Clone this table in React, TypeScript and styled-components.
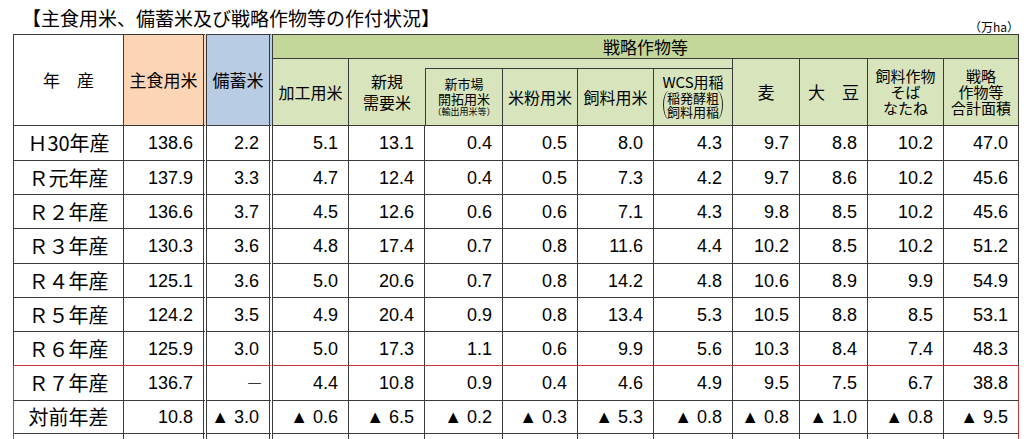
import React from 'react';
import styled, { createGlobalStyle, css } from 'styled-components';

const line = '#3a3a3a';
const red = '#c9363f';

const GlobalStyle = createGlobalStyle`
  body {
    margin: 0;
    background: #fff;
    color: #000;
    font-family: "Noto Sans CJK JP", sans-serif;
  }
`;

const Page = styled.div`
  width: 1006px;
  padding-left: 13px;
`;

const TitleBar = styled.div`
  display: flex;
  justify-content: space-between;
  align-items: flex-end;
  height: 34px;
`;

const Title = styled.h1`
  align-self: flex-start;
  margin: 0;
  padding: 8px 0 0 9px;
  font-size: 19px;
  line-height: 20px;
  font-weight: normal;
`;

const Unit = styled.span`
  font-size: 12px;
  line-height: 12px;
  padding-bottom: 1px;
`;

const Table = styled.table`
  width: 1006px;
  table-layout: fixed;
  border-collapse: separate;
  border-spacing: 0;
`;

const Col = styled.col<{ $w: number }>`
  width: ${p => p.$w}px;
`;

const Row = styled.tr<{ $h: number }>`
  height: ${p => p.$h}px;
`;

type Edge = {
  $first?: boolean;
  $top?: boolean;
  $double?: boolean;
  $noRight?: boolean;
  $leftLine?: boolean;
  $redBottom?: boolean;
  $redLeft?: boolean;
  $redRight?: boolean;
};

const edges = css<Edge>`
  padding: 0;
  border-top: ${p => (p.$top ? `1px solid ${line}` : 'none')};
  border-left: ${p =>
    p.$first || p.$leftLine ? `1px solid ${p.$redLeft ? red : line}` : 'none'};
  border-right: ${p =>
    p.$noRight
      ? 'none'
      : p.$double
      ? `4px double ${line}`
      : `1px solid ${p.$redRight ? red : line}`};
  border-bottom: 1px solid ${p => (p.$redBottom ? red : line)};
`;

const HeadCell = styled.th<Edge & { $bg: string; $size?: number }>`
  ${edges};
  background: ${p => p.$bg};
  font-size: ${p => p.$size ?? 16}px;
  line-height: 1.25;
  font-weight: normal;
  text-align: center;
  vertical-align: middle;
`;

const Stack = styled.span<{ $size: number; $lh: number }>`
  display: block;
  font-size: ${p => p.$size}px;
  line-height: ${p => p.$lh}px;
`;

const Paren = styled.span`
  display: inline-block;
  margin-top: 1px;
  padding: 0 3px;
  border-left: 1.5px solid #222;
  border-right: 1.5px solid #222;
  border-radius: 6px / 14px;
  font-size: 13px;
  line-height: 14px;
`;

const Cell = styled.td<Edge & { $label?: boolean }>`
  ${edges};
  text-align: ${p => (p.$label ? 'center' : 'right')};
  padding-right: ${p => (p.$label ? 0 : 10)}px;
  font-family: ${p =>
    p.$label ? '"Noto Sans CJK JP", sans-serif' : '"Liberation Sans", "Noto Sans CJK JP", sans-serif'};
  font-size: ${p => (p.$label ? 20 : 18)}px;
  line-height: 20px;
  white-space: nowrap;
`;

const Dash = styled.span`
  font-family: "Noto Sans CJK JP", sans-serif;
  font-size: 15px;
  margin-right: -3px;
`;

const colors = {
  white: '#ffffff',
  rice: '#fbd5b5',
  reserve: '#b8cce4',
  crop: '#c4d79b',
  sub: '#d8e4bc',
};

const widths = [111, 83, 66, 76, 76, 78, 75, 76, 79, 67, 68, 76, 75];

// 行の高さ（元の表に合わせて少しずつ違う）
const heights = [35, 34, 34, 35, 34, 34, 34, 35, 33, 34];

const rows: string[][] = [
  ['Ｈ30年産', '138.6', '2.2', '5.1', '13.1', '0.4', '0.5', '8.0', '4.3', '9.7', '8.8', '10.2', '47.0'],
  ['Ｒ元年産', '137.9', '3.3', '4.7', '12.4', '0.4', '0.5', '7.3', '4.2', '9.7', '8.6', '10.2', '45.6'],
  ['Ｒ２年産', '136.6', '3.7', '4.5', '12.6', '0.6', '0.6', '7.1', '4.3', '9.8', '8.5', '10.2', '45.6'],
  ['Ｒ３年産', '130.3', '3.6', '4.8', '17.4', '0.7', '0.8', '11.6', '4.4', '10.2', '8.5', '10.2', '51.2'],
  ['Ｒ４年産', '125.1', '3.6', '5.0', '20.6', '0.7', '0.8', '14.2', '4.8', '10.6', '8.9', '9.9', '54.9'],
  ['Ｒ５年産', '124.2', '3.5', '4.9', '20.4', '0.9', '0.8', '13.4', '5.3', '10.5', '8.8', '8.5', '53.1'],
  ['Ｒ６年産', '125.9', '3.0', '5.0', '17.3', '1.1', '0.6', '9.9', '5.6', '10.3', '8.4', '7.4', '48.3'],
  ['Ｒ７年産', '136.7', '―', '4.4', '10.8', '0.9', '0.4', '4.6', '4.9', '9.5', '7.5', '6.7', '38.8'],
  ['対前年差', '10.8', '▲ 3.0', '▲ 0.6', '▲ 6.5', '▲ 0.2', '▲ 0.3', '▲ 5.3', '▲ 0.8', '▲ 0.8', '▲ 1.0', '▲ 0.8', '▲ 9.5'],
  ['', '', '', '', '', '', '', '', '', '', '', '', ''],
];

// R7 から下を赤枠で囲む
const boxFrom = 7;

export default function App() {
  return (
    <Page>
      <GlobalStyle />
      <TitleBar>
        <Title>【主食用米、備蓄米及び戦略作物等の作付状況】</Title>
        <Unit>（万ha）</Unit>
      </TitleBar>
      <Table>
        <colgroup>
          {widths.map((w, i) => (
            <Col key={i} $w={w} />
          ))}
        </colgroup>
        <thead>
          <Row $h={25}>
            <HeadCell rowSpan={3} $first $top $bg={colors.white} $size={17}>
              年　産
            </HeadCell>
            <HeadCell rowSpan={3} $top $double $bg={colors.rice} $size={17}>
              主食用米
            </HeadCell>
            <HeadCell rowSpan={3} $top $double $bg={colors.reserve} $size={17}>
              備蓄米
            </HeadCell>
            <HeadCell colSpan={10} $top $bg={colors.crop} $size={17}>
              戦略作物等
            </HeadCell>
          </Row>
          <Row $h={10}>
            <HeadCell rowSpan={2} $bg={colors.sub}>
              加工用米
            </HeadCell>
            <HeadCell rowSpan={2} $noRight $bg={colors.sub}>
              <Stack $size={16} $lh={21}>新規</Stack>
              <Stack $size={16} $lh={21}>需要米</Stack>
            </HeadCell>
            <HeadCell colSpan={4} $bg={colors.sub} $size={1} />
            <HeadCell rowSpan={2} $bg={colors.sub} $size={17}>
              麦
            </HeadCell>
            <HeadCell rowSpan={2} $bg={colors.sub} $size={17}>
              大　豆
            </HeadCell>
            <HeadCell rowSpan={2} $bg={colors.sub}>
              <Stack $size={15} $lh={16}>飼料作物</Stack>
              <Stack $size={15} $lh={16}>そば</Stack>
              <Stack $size={15} $lh={16}>なたね</Stack>
            </HeadCell>
            <HeadCell rowSpan={2} $bg={colors.sub}>
              <Stack $size={15} $lh={16}>戦略</Stack>
              <Stack $size={15} $lh={16}>作物等</Stack>
              <Stack $size={15} $lh={16}>合計面積</Stack>
            </HeadCell>
          </Row>
          <Row $h={57}>
            <HeadCell $leftLine $bg={colors.sub}>
              <Stack $size={13} $lh={15}>新市場</Stack>
              <Stack $size={13} $lh={15}>開拓用米</Stack>
              <Stack $size={9} $lh={12}>（輸出用米等）</Stack>
            </HeadCell>
            <HeadCell $bg={colors.sub}>米粉用米</HeadCell>
            <HeadCell $bg={colors.sub}>飼料用米</HeadCell>
            <HeadCell $bg={colors.sub}>
              <Stack $size={15} $lh={16}>WCS用稲</Stack>
              <Paren>
                稲発酵粗
                <br />
                飼料用稲
              </Paren>
            </HeadCell>
          </Row>
        </thead>
        <tbody>
          {rows.map((r, ri) => (
            <Row key={ri} $h={heights[ri]}>
              {r.map((v, ci) => (
                <Cell
                  key={ci}
                  $label={ci === 0}
                  $first={ci === 0}
                  $double={ci === 1 || ci === 2}
                  $redBottom={ri === boxFrom - 1}
                  $redLeft={ci === 0 && ri >= boxFrom}
                  $redRight={ci === r.length - 1 && ri >= boxFrom}
                >
                  {v === '―' ? <Dash>―</Dash> : v}
                </Cell>
              ))}
            </Row>
          ))}
        </tbody>
      </Table>
    </Page>
  );
}
